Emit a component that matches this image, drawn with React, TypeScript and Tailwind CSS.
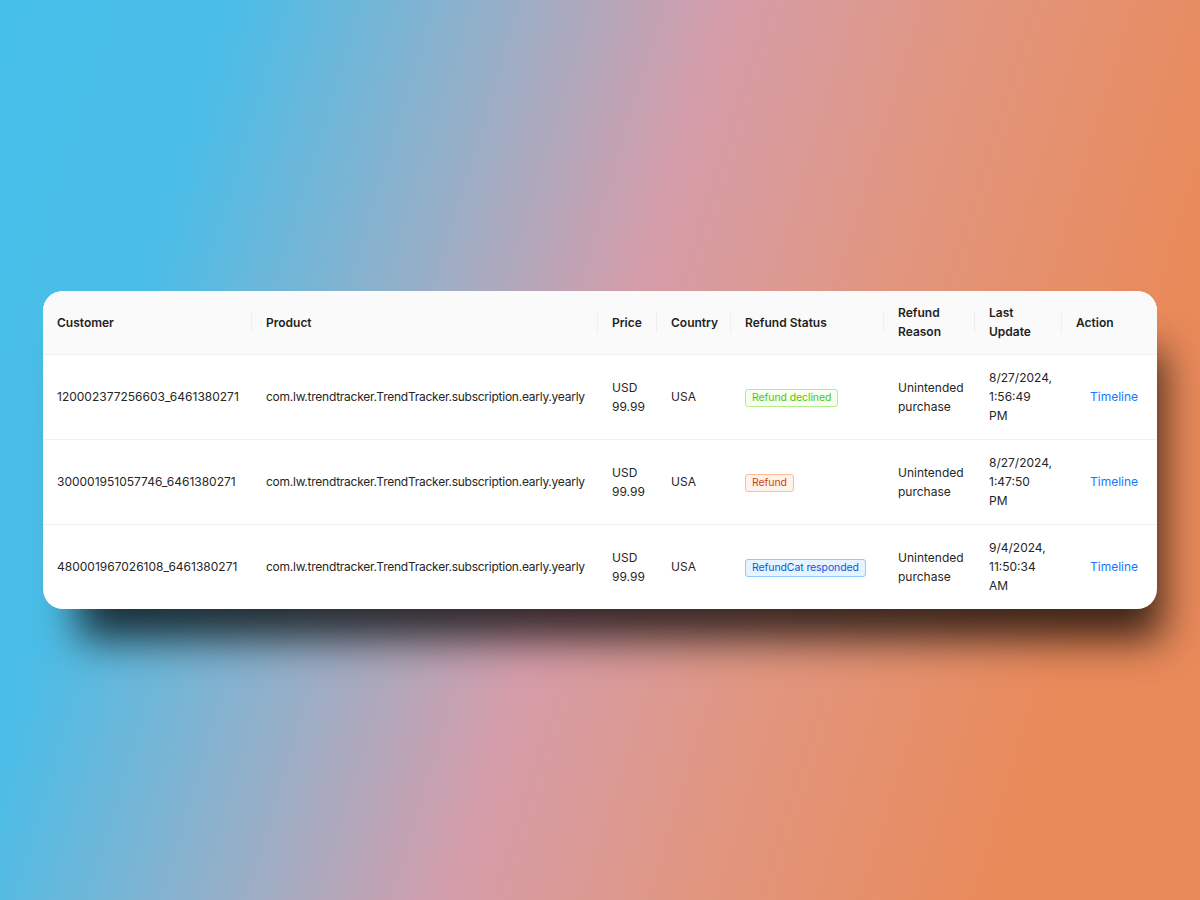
import React from 'react';

type Status = 'declined' | 'refund' | 'responded';

const ROWS: { customer: string; status: Status; date: string[] }[] = [
  { customer: '120002377256603_6461380271', status: 'declined', date: ['8/27/2024,', '1:56:49', 'PM'] },
  { customer: '300001951057746_6461380271', status: 'refund', date: ['8/27/2024,', '1:47:50', 'PM'] },
  { customer: '480001967026108_6461380271', status: 'responded', date: ['9/4/2024,', '11:50:34', 'AM'] },
];

const PRODUCT = 'com.lw.trendtracker.TrendTracker.subscription.early.yearly';

function StatusTag({ status }: { status: Status }) {
  if (status === 'declined') {
    return (
      <span className="inline-block whitespace-nowrap rounded-[3px] border border-[#b7eb8f] bg-[#f6ffed] px-[6px] text-[10.5px] leading-[16px] tracking-[-0.1px] text-[#52c41a]">
        Refund declined
      </span>
    );
  }
  if (status === 'refund') {
    return (
      <span className="inline-block whitespace-nowrap rounded-[3px] border border-[#ffbb96] bg-[#fff2e8] px-[6px] text-[10.5px] leading-[16px] tracking-[-0.1px] text-[#c8461f]">
        Refund
      </span>
    );
  }
  return (
    <span className="inline-block whitespace-nowrap rounded-[3px] border border-[#91caff] bg-[#e6f4ff] px-[6px] text-[10.5px] leading-[16px] tracking-[-0.1px] text-[#0958d9]">
      RefundCat responded
    </span>
  );
}

const TH = "relative px-[14px] text-left align-middle font-semibold text-[#1f1f1f] after:absolute after:right-0 after:top-1/2 after:h-[22px] after:w-px after:-translate-y-1/2 after:bg-[#efefef] after:content-['']";

export default function App() {
  return (
    <div
      className="flex h-[900px] w-[1200px] items-center justify-center bg-[linear-gradient(107deg,#45bfea_0%,#4bbde7_16%,#96afc8_34%,#d49daa_49%,#e1967f_66%,#e98a5a_86%)]"
      style={{ fontFamily: 'Inter, "Noto Sans", sans-serif' }}
    >
      <div className="w-[1114px] overflow-hidden rounded-[20px] bg-white shadow-[20px_45px_40px_-15px_rgba(0,0,0,0.75)]">
        <table className="w-full table-fixed border-collapse text-[12px] leading-[19px] text-[#262626]">
          <colgroup>
            <col className="w-[209px]" />
            <col className="w-[346px]" />
            <col className="w-[59px]" />
            <col className="w-[74px]" />
            <col className="w-[153px]" />
            <col className="w-[91px]" />
            <col className="w-[87px]" />
            <col className="w-[95px]" />
          </colgroup>
          <thead>
            <tr className="h-[63px] bg-[#fafafa]">
              <th className={TH}>Customer</th>
              <th className={TH}>Product</th>
              <th className={TH}>Price</th>
              <th className={TH}>Country</th>
              <th className={TH}>Refund Status</th>
              <th className={TH}>
                Refund
                <br />
                Reason
              </th>
              <th className={TH}>
                Last
                <br />
                Update
              </th>
              <th className="px-[14px] text-left align-middle font-semibold text-[#1f1f1f]">Action</th>
            </tr>
          </thead>
          <tbody>
            {ROWS.map(row => (
              <tr key={row.customer} className="h-[85px] border-t border-[#f0f0f0]">
                <td className="px-[14px] align-middle whitespace-nowrap">{row.customer}</td>
                <td className="px-[14px] align-middle whitespace-nowrap tracking-[-0.25px]">{PRODUCT}</td>
                <td className="px-[14px] align-middle">
                  USD
                  <br />
                  99.99
                </td>
                <td className="px-[14px] align-middle">USA</td>
                <td className="px-[14px] align-middle">
                  <StatusTag status={row.status} />
                </td>
                <td className="px-[14px] align-middle">
                  Unintended
                  <br />
                  purchase
                </td>
                <td className="px-[14px] align-middle">
                  {row.date.map(d => (
                    <div key={d}>{d}</div>
                  ))}
                </td>
                <td className="pl-[28px] align-middle text-[#1677ff]">Timeline</td>
              </tr>
            ))}
          </tbody>
        </table>
      </div>
    </div>
  );
}
